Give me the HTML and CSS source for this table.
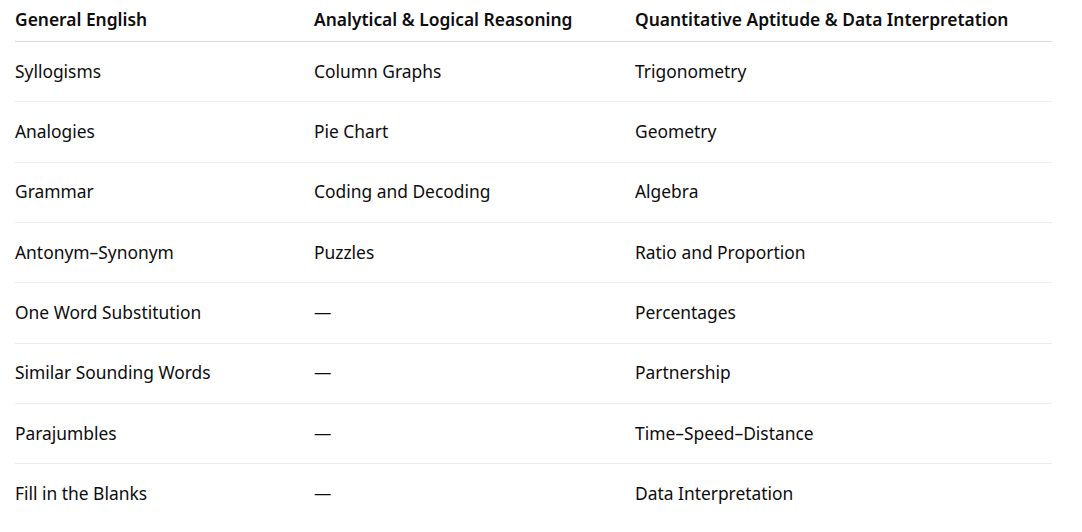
FILE: index.html
```html
<!DOCTYPE html>
<html>
<head>
<meta charset="utf-8">
<link rel="stylesheet" href="styles.css">
</head>
<body>
<table class="topics">
  <colgroup><col class="c1"><col class="c2"><col class="c3"></colgroup>
  <thead>
    <tr><th>General English</th><th>Analytical &amp; Logical Reasoning</th><th>Quantitative Aptitude &amp; Data Interpretation</th></tr>
  </thead>
  <tbody>
    <tr><td>Syllogisms</td><td>Column Graphs</td><td>Trigonometry</td></tr>
    <tr><td>Analogies</td><td>Pie Chart</td><td>Geometry</td></tr>
    <tr><td>Grammar</td><td>Coding and Decoding</td><td>Algebra</td></tr>
    <tr><td>Antonym–Synonym</td><td>Puzzles</td><td>Ratio and Proportion</td></tr>
    <tr><td>One Word Substitution</td><td>—</td><td>Percentages</td></tr>
    <tr><td>Similar Sounding Words</td><td>—</td><td>Partnership</td></tr>
    <tr><td>Parajumbles</td><td>—</td><td>Time–Speed–Distance</td></tr>
    <tr><td>Fill in the Blanks</td><td>—</td><td>Data Interpretation</td></tr>
  </tbody>
</table>
</body>
</html>
```
FILE: styles.css
```css
html, body {
  margin: 0;
  padding: 0;
  background: #ffffff;
}
body {
  font-family: "Noto Sans", "Open Sans", sans-serif;
  color: #0d0d0d;
  font-size: 17.4px;
}
.topics {
  margin-left: 15px;
  width: 1037px;
  border-collapse: collapse;
  table-layout: fixed;
}
.c1 { width: 299px; }
.c2 { width: 321px; }
.topics th {
  text-align: left;
  font-weight: 600;
  height: 38px;
  padding: 0 0 3px 0;
  vertical-align: middle;
  border-bottom: 1px solid #d9d9d9;
}
.topics td {
  height: 57.33px;
  padding: 0 0 2px 0;
  vertical-align: middle;
  border-bottom: 1px solid #ececec;
}
.topics tbody tr:last-child td {
  border-bottom: none;
}
```
